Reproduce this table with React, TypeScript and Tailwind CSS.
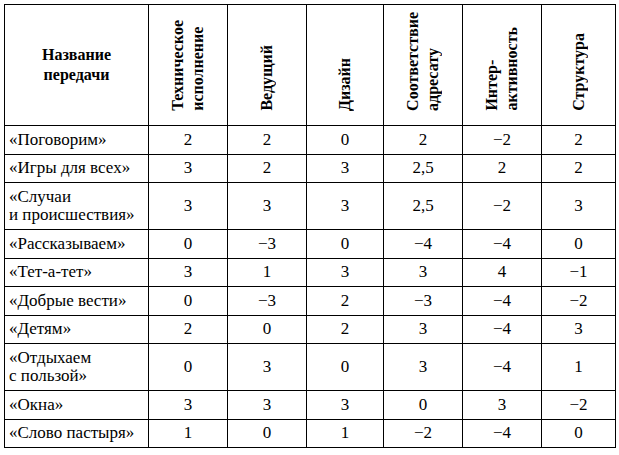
const columns = [
  { title: ["Техническое", "исполнение"], width: "w-[79px]" },
  { title: ["Ведущий"], width: "w-[79px]" },
  { title: ["Дизайн"], width: "w-[77px]" },
  { title: ["Соответствие", "адресату"], width: "w-[79px]" },
  { title: ["Интер-", "активность"], width: "w-[79px]" },
  { title: ["Структура"], width: "w-[74px]" },
];

const rows: { name: string[]; values: string[] }[] = [
  { name: ["«Поговорим»"], values: ["2", "2", "0", "2", "−2", "2"] },
  { name: ["«Игры для всех»"], values: ["3", "2", "3", "2,5", "2", "2"] },
  { name: ["«Случаи", "и происшествия»"], values: ["3", "3", "3", "2,5", "−2", "3"] },
  { name: ["«Рассказываем»"], values: ["0", "−3", "0", "−4", "−4", "0"] },
  { name: ["«Тет-а-тет»"], values: ["3", "1", "3", "3", "4", "−1"] },
  { name: ["«Добрые вести»"], values: ["0", "−3", "2", "−3", "−4", "−2"] },
  { name: ["«Детям»"], values: ["2", "0", "2", "3", "−4", "3"] },
  { name: ["«Отдыхаем", "с пользой»"], values: ["0", "3", "0", "3", "−4", "1"] },
  { name: ["«Окна»"], values: ["3", "3", "3", "0", "3", "−2"] },
  { name: ["«Слово пастыря»"], values: ["1", "0", "1", "−2", "−4", "0"] },
];

export default function App() {
  return (
    <div className="font-serif min-h-[455px] w-[619px] bg-white pl-[4px] pt-[4px] text-black">
      <table className="font-['Liberation_Serif'] w-[611px] table-fixed border-collapse">
        <colgroup>
          <col className="w-[144px]" />
          {columns.map((c, i) => (
            <col key={i} className={c.width} />
          ))}
        </colgroup>
        <thead className="[font-family:Liberation_Serif]">
          <tr className="h-[121px]">
            <th className="border border-black text-center align-middle text-[16px] font-bold leading-[20px]">
              Название
              <br />
              передачи
            </th>
            {columns.map((c, i) => (
              <th
                key={i}
                className="border border-black pb-[9px] text-center align-bottom text-[16px] font-bold leading-[20px]"
              >
                <div className="inline-block rotate-180 text-left [writing-mode:vertical-rl]">
                  {c.title.map((line, j) => (
                    <div key={j}>{line}</div>
                  ))}
                </div>
              </th>
            ))}
          </tr>
        </thead>
        <tbody className="[font-family:Liberation_Serif] text-[17px] leading-[18px]">
          {rows.map((r, i) => (
            <tr key={i} className={r.name.length > 1 ? "h-[47px]" : "h-[28.5px]"}>
              <td className="border border-black pl-[4px] align-middle">
                {r.name.map((line, j) => (
                  <div key={j}>{line}</div>
                ))}
              </td>
              {r.values.map((v, j) => (
                <td key={j} className="border border-black text-center align-middle">
                  {v}
                </td>
              ))}
            </tr>
          ))}
        </tbody>
      </table>
    </div>
  );
}
